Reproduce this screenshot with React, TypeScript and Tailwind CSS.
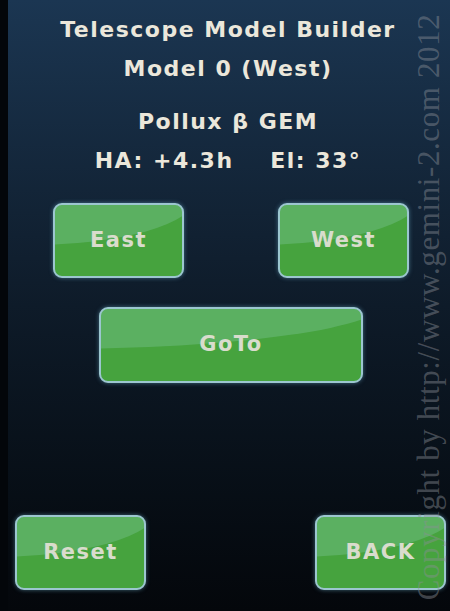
type BtnProps = {
  label: string;
  className: string;
};

const GlossButton = ({ label, className }: BtnProps) => {
  return (
    <div
      className={`relative overflow-hidden rounded-[9px] border-2 border-[#9cc6cf] bg-[#46a33e] shadow-[0_0_4px_rgba(120,190,220,0.5)] ${className}`}
    >
      {/* gloss */}
      <div className="absolute -left-[150%] -top-[77%] h-[133%] w-[260%] rounded-[50%] bg-[#9ad6cc]/25"></div>
      <span className="relative flex h-full items-center justify-center text-[21px] font-bold tracking-[1.5px] text-[#d9dccd]">
        {label}
      </span>
    </div>
  );
};

export default function App() {
  return (
    <div
      className="relative h-[611px] w-[450px] overflow-hidden bg-gradient-to-b from-[#1b3652] via-[#0e1b29] to-[#04070b] text-[#ebe7db]"
      style={{ fontFamily: '"DejaVu Sans", "Liberation Sans", sans-serif' }}
    >
      {/* left black strip */}
      <div className="absolute left-0 top-0 h-full w-[8px] bg-[#03060a]"></div>

      <div className="flex flex-col">
        {/* Header */}
        <header className="flex flex-col items-center pl-[6px] pt-[10px] text-[22px] font-bold leading-[39px] tracking-[1.5px]">
          <p>Telescope Model Builder</p>
          <p>Model 0 (West)</p>
          <p className="mt-[14px]">Pollux β GEM</p>
          <p>HA: +4.3h&nbsp;&nbsp;&nbsp;&nbsp;El: 33°</p>
        </header>

        {/* East / West */}
        <div className="mt-[23px] flex gap-[94px] pl-[53px]">
          <GlossButton label="East" className="h-[75px] w-[131px]" />
          <GlossButton label="West" className="h-[75px] w-[131px]" />
        </div>

        {/* GoTo */}
        <div className="mt-[29px] pl-[99px]">
          <GlossButton label="GoTo" className="h-[76px] w-[264px]" />
        </div>

        {/* Reset / BACK */}
        <div className="mt-[132px] flex gap-[169px] pl-[15px]">
          <GlossButton label="Reset" className="h-[75px] w-[131px]" />
          <GlossButton label="BACK" className="h-[75px] w-[131px]" />
        </div>
      </div>

      {/* watermark */}
      <div
        className="pointer-events-none absolute left-[428px] top-[307px] -translate-x-1/2 -translate-y-1/2 -rotate-90 whitespace-nowrap text-[31px] leading-none tracking-[0.6px] text-[#8a8e96]/45"
        style={{ fontFamily: '"Liberation Serif", "DejaVu Serif", serif' }}
      >
        Copyright by http://www.gemini-2.com 2012
      </div>
    </div>
  );
}
